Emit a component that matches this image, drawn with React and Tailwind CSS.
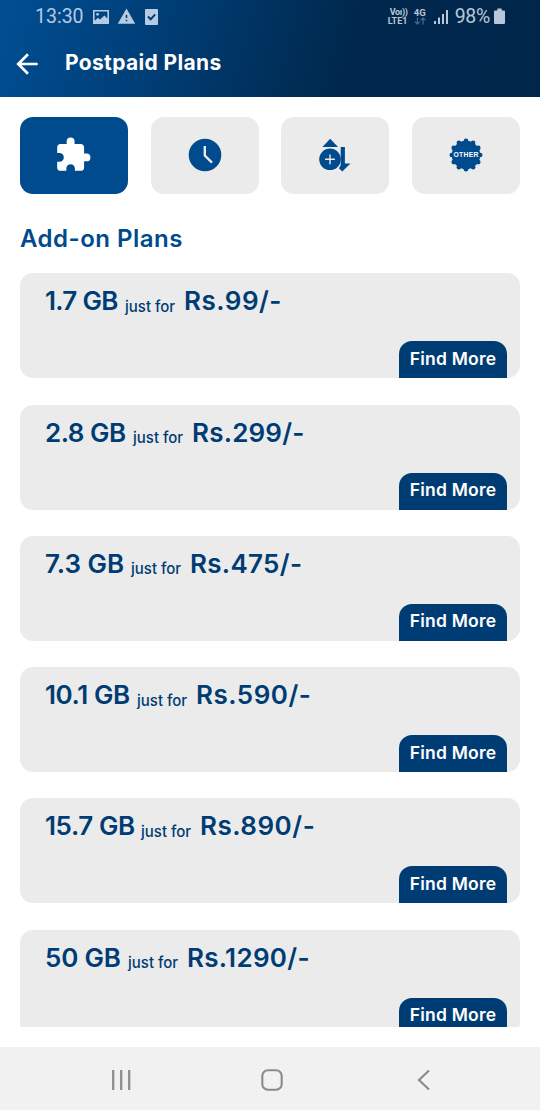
import clsx from 'clsx';
import { MdExtension, MdWarning, MdArrowBack } from 'react-icons/md';

const plans = [
  { data: '1.7 GB', price: 'Rs.99/-', dataClass: 'w-[80px] tracking-[-0.7px]', priceClass: 'tracking-[0.5px]' },
  { data: '2.8 GB', price: 'Rs.299/-', dataClass: 'w-[88px] tracking-[-0.5px]', priceClass: 'tracking-[0.2px]' },
  { data: '7.3 GB', price: 'Rs.475/-', dataClass: 'w-[86px] tracking-[0px]', priceClass: 'tracking-[0.3px]' },
  { data: '10.1 GB', price: 'Rs.590/-', dataClass: 'w-[92px] tracking-[-0.4px]', priceClass: 'tracking-[0.5px]' },
  { data: '15.7 GB', price: 'Rs.890/-', dataClass: 'w-[96px] tracking-[-0.4px]', priceClass: 'tracking-[0.5px]' },
  { data: '50 GB', price: 'Rs.1290/-', dataClass: 'w-[83px] tracking-[-0.2px]', priceClass: 'tracking-[0.3px]' },
];

const ClockIcon = () => (
  <svg width="34" height="34" viewBox="0 0 34 34" fill="none">
    <circle cx="17" cy="17" r="16.3" fill="#004b8d" />
    <path d="M16.8 8v9.6l7.2 7" stroke="#ebebeb" strokeWidth="2.4" />
  </svg>
);

const TopUpIcon = () => (
  <svg width="34" height="34" viewBox="0 0 34 34" fill="#004b8d">
    <path d="M12.2.8 20 9H4.4z" />
    <circle cx="12" cy="21.3" r="10.8" />
    <path d="M12 16.4v9.8M7.1 21.3h9.8" stroke="#ebebeb" strokeWidth="1.4" />
    <path d="M22.7 9h4.2v16.5h5.6l-8.2 8.1-3.4-3.3c1.4-1.7 1.8-3.1 1.8-4.3z" />
  </svg>
);

const OtherIcon = () => {
  const teeth = Array.from({ length: 12 }, (_, i) => (i * Math.PI * 2) / 12);
  return (
    <svg width="34" height="34" viewBox="0 0 34 34" fill="#004b8d">
      <circle cx="17" cy="17" r="14.2" />
      {teeth.map((a) => (
        <circle key={a} cx={17 + 14.2 * Math.sin(a)} cy={17 - 14.2 * Math.cos(a)} r="2.3" />
      ))}
      <text x="17" y="19.4" fill="#fff" textAnchor="middle" textLength="25" className="font-['Liberation_Sans',sans-serif] text-[6.8px] font-bold">
        OTHER
      </text>
    </svg>
  );
};

const tabs = [
  { id: 'addon', icon: <MdExtension className="-ml-0.5 h-[38px] w-[38px] text-white" /> },
  { id: 'validity', icon: <ClockIcon /> },
  { id: 'topup', icon: <TopUpIcon /> },
  { id: 'other', icon: <OtherIcon /> },
];

const StatusBar = () => (
  <div className="flex h-[33px] items-center pl-[35px] pr-[35px] font-[Roboto,sans-serif] text-[#b4cbe2]">
    <span className="w-[58px] text-[19.5px] leading-8">13:30</span>
    <svg width="16" height="14" viewBox="0 0 16 14">
      <path fillRule="evenodd" fill="currentColor" d="M0 0h16v14H0zM1.6 1.6v9.2l3.4-3 2 1.8 4.4-4 3 3V1.6z" />
      <circle cx="4.6" cy="4.3" r="1.4" fill="currentColor" />
    </svg>
    <MdWarning className="ml-2 h-[19px] w-[19px]" />
    <svg className="ml-[9px]" width="13" height="16" viewBox="0 0 13 16">
      <rect width="13" height="16" rx="1" fill="currentColor" />
      <path d="m3 7.5 2.7 2.8L10.2 5.4" stroke="#003d73" strokeWidth="2" fill="none" />
    </svg>

    <div className="ml-auto flex items-center text-[#b9c7d8]">
      <div className="w-[26px] whitespace-nowrap text-[9px] font-bold leading-[8.5px]">
        <div className="pl-0.5 tracking-[-0.3px]">Voı))</div>
        <div>LTE1</div>
      </div>
      <div className="w-[20px] text-[9.5px] font-bold leading-[9px]">
        <div>4G</div>
        <svg width="12" height="8" viewBox="0 0 12 8" fill="none" stroke="#45658a" strokeWidth="1.3">
          <path d="M3.4.5V7M.9 4.6 3.4 7l2.5-2.4M9 7.5V1M6.5 3.4 9 1l2.5 2.4" />
        </svg>
      </div>
      <svg className="mr-[7px]" width="14" height="16" viewBox="0 0 14 16" fill="currentColor">
        <path d="M0 12h2v3H0zM4 8.5h2V15H4zM8 5h2v10H8zM12 1h2v14h-2z" />
      </svg>
      <span className="text-[19.5px] leading-8 tracking-[-0.3px]">98%</span>
      <svg className="ml-1" width="11" height="17" viewBox="0 0 11 17" fill="currentColor">
        <path d="M3.3.5h4.4v2H10a1 1 0 0 1 1 1V15a1 1 0 0 1-1 1H1a1 1 0 0 1-1-1V3.5a1 1 0 0 1 1-1h2.3z" />
      </svg>
    </div>
  </div>
);

const PlanCard = ({ plan }) => (
  <div className="flex h-[105px] shrink-0 flex-col justify-between rounded-[13px] bg-[#ebebeb] pl-[25px] pr-[13px]">
    <div className="flex items-baseline whitespace-nowrap pt-2 text-[26px] font-semibold leading-10 text-[#003c74]">
      <span className={plan.dataClass}>{plan.data}</span>
      <span className="w-[59px] text-[15px] font-medium leading-none">
        <span className="relative top-[1.5px]">just for</span>
      </span>
      <span className={plan.priceClass}>{plan.price}</span>
    </div>
    <button className="h-[37px] w-[108px] self-end whitespace-nowrap rounded-t-[13px] bg-[#003c74] pb-0.5 text-[17.5px] font-semibold tracking-[0.2px] text-white">
      Find More
    </button>
  </div>
);

const App = () => {
  return (
    <div className="flex h-[1110px] w-[540px] flex-col overflow-hidden bg-white font-[Inter,sans-serif]">
      {/* Header */}
      <header className="h-[97px] shrink-0 bg-[linear-gradient(105deg,#004e93_0%,#003f78_28%,#00284c_64%,#00264a_100%)]">
        <StatusBar />
        <div className="flex h-[60px] items-center pl-[11px] text-white">
          <MdArrowBack className="mt-0.5 h-[32px] w-[32px]" />
          <h1 className="ml-[22px] text-[21px] font-bold tracking-[0.35px]">Postpaid Plans</h1>
        </div>
      </header>

      <main className="flex h-[930px] shrink-0 flex-col overflow-hidden px-5 pt-[19.5px]">
        {/* Plan categories */}
        <div className="flex shrink-0 justify-between">
          {tabs.map((tab, i) => (
            <button
              key={tab.id}
              className={clsx(
                'flex h-[77px] w-[108px] items-center justify-center rounded-[13px]',
                i === 0 ? 'bg-[#004b8d]' : 'bg-[#ebebeb]'
              )}
            >
              {tab.icon}
            </button>
          ))}
        </div>

        <h2 className="mt-[25px] shrink-0 text-[24px] font-semibold leading-10 tracking-[0.5px] text-[#004b8d]">Add-on Plans</h2>

        <div className="mt-[14.8px] flex flex-col gap-[26.3px]">
          {plans.map((plan) => (
            <PlanCard key={plan.data} plan={plan} />
          ))}
        </div>
      </main>

      {/* Android navigation */}
      <nav className="mt-5 flex h-[63px] shrink-0 items-center justify-between bg-[#f1f1f1] pl-[111px] pr-[110px] pt-0.5 text-[#8a8a8a]">
        <svg width="20" height="22" viewBox="0 0 20 22" stroke="currentColor" strokeWidth="2.2">
          <path d="M2.2 1v20M10.2 1v20M18.2 1v20" />
        </svg>
        <svg className="-ml-1" width="22" height="22" viewBox="0 0 22 22" fill="none" stroke="currentColor" strokeWidth="2.1">
          <rect x="1.3" y="1.3" width="19.4" height="19.4" rx="5.5" />
        </svg>
        <svg width="13" height="22" viewBox="0 0 13 22" fill="none" stroke="currentColor" strokeWidth="2.1">
          <path d="M12 1.5 2 11l10 9.5" />
        </svg>
      </nav>
    </div>
  );
};

export default App;
